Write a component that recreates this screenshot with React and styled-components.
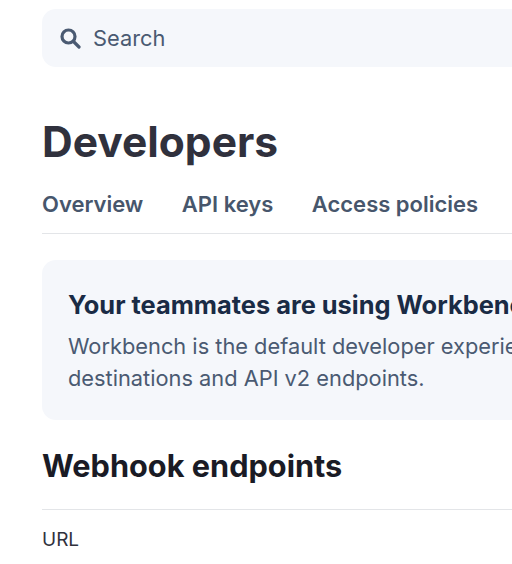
import React from "react";
import styled, { createGlobalStyle } from "styled-components";

const Global = createGlobalStyle`
  html, body { margin: 0; padding: 0; background: #fff; overflow: hidden; }
  body { font-family: Inter, "Liberation Sans", sans-serif; }
`;
const Page = styled.div`
  width: 512px;
  height: 564px;
  padding: 9px 0 0 42px;
  box-sizing: border-box;
  overflow: hidden;
`;
const SearchBar = styled.div`
  display: flex;
  align-items: center;
  gap: 12px;
  height: 58px;
  width: 600px;
  padding-left: 18px;
  box-sizing: border-box;
  background: #f5f7fb;
  border-radius: 14px;
  color: #4a5a72;
  font-size: 21.8px;
`;
const Title = styled.h1`
  margin: 50px 0 0;
  font-size: 42.5px;
  line-height: 50px;
  font-weight: 700;
  color: #30313d;
`;
const Tabs = styled.nav`
  display: flex;
  gap: 38.5px;
  margin-top: 21px;
  width: 600px;
  height: 45px;
  border-bottom: 1px solid #e3e5e8;
`;
const Tab = styled.span`
  font-size: 22px;
  line-height: 32px;
  font-weight: 600;
  color: #47566c;
`;
const Notice = styled.section`
  margin-top: 26px;
  width: 600px;
  height: 160px;
  padding: 28px 26px 0;
  box-sizing: border-box;
  background: #f5f7fb;
  border-radius: 14px;
`;
const NoticeTitle = styled.div`
  font-size: 25.4px;
  line-height: 34px;
  font-weight: 700;
  color: #1a2b45;
  white-space: nowrap;
`;
const NoticeBody = styled.div`
  margin-top: 8px;
  font-size: 21.8px;
  line-height: 32px;
  color: #4a5a72;
  white-space: nowrap;
`;
const Heading = styled.h2`
  margin: 25px 0 0;
  font-size: 30.7px;
  line-height: 42px;
  font-weight: 700;
  color: #1a1b25;
`;
const Column = styled.div`
  margin-top: 22px;
  width: 600px;
  padding-top: 16px;
  border-top: 1px solid #e3e5e8;
  font-size: 19px;
  line-height: 28px;
  color: #30313d;
`;

export default function App() {
  return (
    <Page>
      <Global />
      <SearchBar>
        <svg width="21" height="21" viewBox="0 0 21 21" fill="none" stroke="#4a5a72" strokeWidth="3.2" strokeLinecap="round">
          <circle cx="8.5" cy="8.5" r="6.5" />
          <path d="M13.5 13.5 19 19" />
        </svg>
        Search
      </SearchBar>
      <Title>Developers</Title>
      <Tabs>
        <Tab>Overview</Tab>
        <Tab>API keys</Tab>
        <Tab>Access policies</Tab>
      </Tabs>
      <Notice>
        <NoticeTitle>Your teammates are using Workbench</NoticeTitle>
        <NoticeBody>
          Workbench is the default developer experience
          <br />
          destinations and API v2 endpoints.
        </NoticeBody>
      </Notice>
      <Heading>Webhook endpoints</Heading>
      <Column>URL</Column>
    </Page>
  );
}
